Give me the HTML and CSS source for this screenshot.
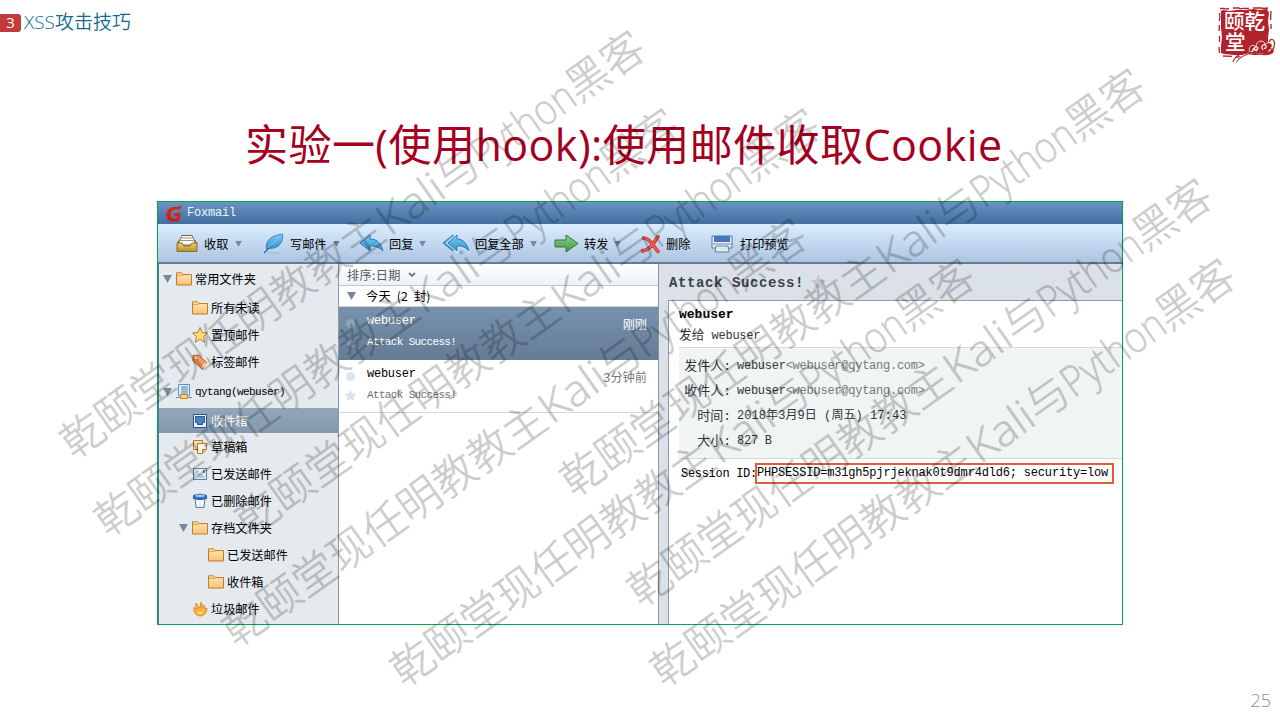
FILE: index.html
```html
<!DOCTYPE html>
<html lang="zh-CN">
<head>
<meta charset="utf-8">
<title>XSS攻击技巧</title>
<link rel="stylesheet" href="styles.css">
</head>
<body>
<svg class="defs" width="0" height="0">
  <defs>
    <linearGradient id="gFolder" x1="0" y1="0" x2="0" y2="1"><stop offset="0" stop-color="#ffe6b4"/><stop offset="1" stop-color="#fcc274"/></linearGradient>
    <linearGradient id="gBlue" x1="0" y1="0" x2="0" y2="1"><stop offset="0" stop-color="#7ccbf3"/><stop offset="1" stop-color="#3490d2"/></linearGradient>
    <linearGradient id="gGreen" x1="0" y1="0" x2="0" y2="1"><stop offset="0" stop-color="#8fd08c"/><stop offset="1" stop-color="#3d9a45"/></linearGradient>
    <linearGradient id="gGold" x1="0" y1="0" x2="0" y2="1"><stop offset="0" stop-color="#e8cf7d"/><stop offset="1" stop-color="#b98f2f"/></linearGradient>
    <symbol id="folder" viewBox="0 0 16 14"><path d="M.5 13V.8h5L7 2.500h8.500V13z" fill="url(#gFolder)" stroke="#c07d2b"/><path d="M1 3.300h6" stroke="#dc9b48"/></symbol>
    <symbol id="tri" viewBox="0 0 9 8"><path d="M0 0h9L4.500 8z" fill="#7489a0"/></symbol>
    <symbol id="star" viewBox="0 0 16 16"><path d="M8 .5l2.200 5 5.300.5-4 3.600 1.200 5.600L8 12.300l-4.700 2.900 1.200-5.600L.5 6l5.300-.5z"/></symbol>
  </defs>
</svg>
<main class="slide">
  <header class="top">
    <span class="badge">3</span><span class="crumb">XSS攻击技巧</span>
    <svg class="seal" width="60" height="58" viewBox="0 0 60 58">
      <path d="M4 5l2-1 6 1 8-1 7 0 10-1 5 1 8-1 2 4-1 8 1 9-1 8 1 12-2 4-12 1H17l-10-1-3-1V40l1-9-1-9V11z" fill="#b0232a"/>
      <path d="M3 2.500h4l2 .6 3-.6M16 2h6l1 .8 3-.5h6M36 2h8l3 .5 4-.5M2.500 7l.4 4-.6 4M2.500 19l-.4 6M2.500 30v6M2 41l.5 6M6 50l9 .4M19 51h5M54 5l-.4 9M54 18v5" stroke="#b0232a" stroke-width="1.300" fill="none"/>
      <text class="seal-text" x="7" y="22.500">颐乾</text><text class="seal-text" x="8" y="43.500">堂</text>
      <path d="M33 46c-3-5 3-9 6-5 0-7 9-8 9-2 3-5 10-1 6 3 5 0 4 7-3 7-7-1-13-3-20 0-7 2-12 7-14 12 1-6 6-12 15-14" fill="#b0232a" stroke="#fff" stroke-width=".8"/>
      <path d="M40 45c-4-1-3-5 0-4 2 1 1 3-1 2M46 44c-3-4 1-7 3-4 1 2-1 3-2 2M34 46c2-1 3-2 2-4M51 45c2 0 3-1 2-2" fill="none" stroke="#fff" stroke-width="1.100"/>
      <path d="M16 56c3-8 9-9 17-9 9 0 18 5 22-2 2-3 3-7 2-10-2-3-5-1-4 1" fill="none" stroke="#b0232a" stroke-width="1.200"/>
    </svg>
  </header>
  <h1 class="title">实验一(使用hook):使用邮件收取Cookie</h1>

  <section class="window">
    <div class="titlebar">
      <svg width="17" height="17" viewBox="0 0 17 17"><path d="M15.500 0L14 4.500H8L5 7v5l1.500 1.500h4l1-2.500H8V8h7l-1 6-2.500 2.500H4L1 14 0 9.500 2 5l4-3h6z" fill="#dc2412"/><path d="M2 12l3 3h6" stroke="#a41408" fill="none"/></svg>
      <span>Foxmail</span>
    </div>
    <div class="toolbar">
      <div class="tool t1"><svg width="22" height="20" viewBox="0 0 22 20"><path d="M3 8l3-6.500h10L19 8v3H3z" fill="#fff" stroke="#75633d"/><path d="M5.500 4h11M4.500 6.500h13" stroke="#938568" stroke-width=".9"/><path d="M1 9l2.500-3M21 9l-2.500-3" stroke="#70561f"/><path d="M1 9h5l2 3h6l2-3h5v8.500H1z" fill="url(#gGold)" stroke="#8d6b22"/></svg><span>收取</span><svg class="drop"><use href="#tri"/></svg></div>
      <div class="tool t2"><svg width="22" height="22" viewBox="0 0 22 22"><path d="M5 20h13" stroke="#9cb7cf" stroke-width="2" opacity=".5"/><path d="M3.500 16C1.500 7 10 2 19.500 1c1 8-3 15-14 14.500z" fill="url(#gBlue)" stroke="#2d80bd" stroke-width=".8"/><path d="M1 20L8 13" stroke="#2a6ba3" stroke-width="1.300"/><path d="M5 15L16 4" stroke="#a5dcf7" stroke-width=".8"/></svg><span>写邮件</span><svg class="drop"><use href="#tri"/></svg></div>
      <div class="tool t3"><svg width="25" height="20" viewBox="0 0 25 20"><path d="M1 9L11 1v4c7 0 11 4 13 12-4-4-8-5-13-5v5z" fill="url(#gBlue)" stroke="#3179b6"/><path d="M9 19h14" stroke="#9cb7cf" opacity=".6"/></svg><span>回复</span><svg class="drop"><use href="#tri"/></svg></div>
      <div class="tool t4"><svg width="28" height="20" viewBox="0 0 28 20"><path d="M1 9L11 1v16z" fill="url(#gBlue)" stroke="#3179b6"/><path d="M6 9l9-8v4c6 0 10 4 12 12-4-4-7-5-12-5v5z" fill="none" stroke="#d4e8f8" stroke-width="2.500"/><path d="M6 9l9-8v4c6 0 10 4 12 12-4-4-7-5-12-5v5z" fill="url(#gBlue)" stroke="#3179b6"/></svg><span>回复全部</span><svg class="drop"><use href="#tri"/></svg></div>
      <div class="tool t5"><svg width="25" height="20" viewBox="0 0 25 20"><path d="M1 6h11V1l12 8.500L12 18v-5H1z" fill="url(#gGreen)" stroke="#2f7938"/></svg><span>转发</span><svg class="drop"><use href="#tri"/></svg></div>
      <div class="tool t6"><svg width="20" height="19" viewBox="0 0 20 19"><path d="M2.500 3c6 0 8 6 14.500 13.500M17 1.500C13 7 11 14 1.500 16" fill="none" stroke="#b2322f" stroke-width="3.600" stroke-linecap="round"/><path d="M2.500 3c6 0 8 6 14.500 13.500M17 1.500C13 7 11 14 1.500 16" fill="none" stroke="#ee5a50" stroke-width="2.200" stroke-linecap="round"/></svg><span>删除</span></div>
      <div class="tool t7"><svg width="22" height="18" viewBox="0 0 22 18"><path d="M1 1h20v12H1z" fill="#e8f0f7" stroke="#5b768e"/><path d="M3 1h16v6H3z" fill="#4577be"/><path d="M2 9h18" stroke="#708ba3"/><path d="M5 11h12l1 6H4z" fill="#d8eef4" stroke="#5f8b9b"/></svg><span>打印预览</span></div>
    </div>
    <div class="body">
      <nav class="side">
        <div class="row r0 first"><svg class="exp"><use href="#tri"/></svg><svg class="ic"><use href="#folder"/></svg><span>常用文件夹</span></div>
        <div class="row r1"><svg class="ic"><use href="#folder"/></svg><span>所有未读</span></div>
        <div class="row r1"><svg class="ic" viewBox="0 0 16 16"><use href="#star" fill="#ffdc7c" stroke="#b67d2b"/></svg><span>置顶邮件</span></div>
        <div class="row r1"><svg class="ic" viewBox="0 0 16 16"><path d="M1 1.500l6-.5 8 8-5 6-9-8z" fill="#f29b59" stroke="#b75c21"/><path d="M9.500 14L14.500 9" stroke="#ffd09e" stroke-width="2"/><circle cx="4" cy="4" r="1.500" fill="#fff" stroke="#a9551f" stroke-width=".6"/></svg><span>标签邮件</span></div>
        <div class="row r0 account"><svg class="exp"><use href="#tri"/></svg><svg class="ic" viewBox="0 0 16 16"><path d="M2.500.5h11v11h-11z" fill="#e3f2fd" stroke="#5b92c2"/><path d="M5 3h7M5 5h7M5 7h7M5 9h7" stroke="#527fa8"/><path d="M0 13.500h16" stroke="#6d8aa5"/><path d="M4.500 10.500h7v4h-7z" fill="#ffd275" stroke="#c28a2d"/></svg><span class="lat">qytang(webuser)</span></div>
        <div class="row r1 on"><svg class="ic" viewBox="0 0 16 16"><path d="M1.500 1.500h13v13h-13z" fill="#edf5fc" stroke="#234f86"/><path d="M3.500 3.500h9v6h-2v2h-5v-2h-2z" fill="#4b83c6" stroke="#28578f"/></svg><span>收件箱</span></div>
        <div class="row r1"><svg class="ic" viewBox="0 0 16 16"><path d="M1.500 1.500h9v9h-9z" fill="#ffe2b3" stroke="#b27a38"/><path d="M5.500 4.500h9v6l-4 4h-5z" fill="#fff3dc" stroke="#b27a38"/><path d="M14.500 10.500h-4v4" fill="#eab970" stroke="#b27a38"/></svg><span>草稿箱</span></div>
        <div class="row r1"><svg class="ic" viewBox="0 0 16 16"><path d="M1.500 2.500h13v11h-13z" fill="#e9f1f8" stroke="#607e9b"/><path d="M11 4h2v3h-2z" fill="#5b9c71"/><path d="M3 5h4M3 7h3M6 9h5M6 11h7" stroke="#89a5be"/></svg><span>已发送邮件</span></div>
        <div class="row r1"><svg class="ic" viewBox="0 0 16 16"><path d="M3 5h10l-1 9.500H4z" fill="#eef3f7" stroke="#63788e"/><path d="M1.500 2.500q6.500-3 13 0v3q-6.500 2-13 0z" fill="#3274c6" stroke="#1e559b"/><ellipse cx="8" cy="2.800" rx="5" ry="1.200" fill="#9bc7f3"/></svg><span>已删除邮件</span></div>
        <div class="row r1x"><svg class="exp"><use href="#tri"/></svg><svg class="ic"><use href="#folder"/></svg><span>存档文件夹</span></div>
        <div class="row r2"><svg class="ic"><use href="#folder"/></svg><span>已发送邮件</span></div>
        <div class="row r2"><svg class="ic"><use href="#folder"/></svg><span>收件箱</span></div>
        <div class="row r1"><svg class="ic" viewBox="0 0 16 16"><path d="M2 6c1 1 2 2 3 2 0-2-2-3-1-6 1 2 3 3 4 5 1-2 0-4 1-6 1 2 2 4 1 6 1 0 2-1 2-3 1 1 1 2 1 4l2-1c0 5-3 8-7 8S1 11 2 6z" fill="#fbb040" stroke="#d7801f" stroke-width=".8"/><path d="M5 10.500l3 1 3-1c0 3-6 3-6 0z" fill="#ffe98f"/></svg><span>垃圾邮件</span></div>
      </nav>
      <section class="list">
        <div class="sort">排序:日期<svg width="8" height="6" viewBox="0 0 8 6"><path d="M1 1l3 3 3-3" fill="none" stroke="#4e5963" stroke-width="1.500"/></svg></div>
        <div class="day"><svg class="exp"><use href="#tri"/></svg><span>今天 (2 封)</span></div>
        <article class="mail sel">
          <div class="marks"><i class="dot"></i><svg width="13" height="13" viewBox="0 0 16 16"><use href="#star" fill="#7f9ab4"/></svg></div>
          <div class="who"><div>webuser</div><div>Attack Success!</div></div><time>刚刚</time>
        </article>
        <article class="mail">
          <div class="marks"><i class="dot"></i><svg width="13" height="13" viewBox="0 0 16 16"><use href="#star" fill="#d7e3ee"/></svg></div>
          <div class="who"><div>webuser</div><div class="subj">Attack Success!</div></div><time>3分钟前</time>
        </article>
      </section>
      <section class="reader">
        <div class="subject"><span>Attack Success!</span><svg width="17" height="17" viewBox="0 0 16 16"><use href="#star" fill="#c0c8d0"/></svg></div>
        <div class="message">
          <div class="from">webuser</div>
          <div class="to"><span class="cjk">发给</span> webuser</div>
          <div class="meta">
            <span class="k">发件人:</span><span>webuser<em>&lt;webuser@qytang.com&gt;</em></span>
            <span class="k">收件人:</span><span>webuser<em>&lt;webuser@qytang.com&gt;</em></span>
            <span class="k">时间:</span><span class="date">2018年3月9日 (周五) 17:43</span>
            <span class="k">大小:</span><span>827 B</span>
          </div>
          <div class="session"><span>Session ID:</span><span class="box">PHPSESSID=m31gh5pjrjeknak0t9dmr4dld6; security=low</span></div>
        </div>
      </section>
    </div>
  </section>
  <footer class="page">25</footer>
  <svg class="wm" width="1280" height="720" viewBox="0 0 1280 720"></svg>
</main>
<script src="watermark.js"></script>
</body>
</html>
```
FILE: watermark.js
```js
// Centre of the first character of every diagonal watermark line.
const origins = [[82,434],[116,512],[257,512],[244,622],[582,472],[649,582],[412,662],[672,662]];
const layer = document.querySelector('.wm');
layer.innerHTML = origins.map(([x, y]) =>
  `<g transform="translate(${x} ${y}) rotate(-35.2)">
    <text x="-21.5" y="16.5" textLength="385" lengthAdjust="spacingAndGlyphs">乾颐堂现任明教教主</text>
    <text x="365" y="16.5" textLength="72" lengthAdjust="spacingAndGlyphs">Kali</text>
    <text x="437" y="16.5">与</text>
    <text x="480" y="16.5" textLength="117" lengthAdjust="spacingAndGlyphs">Python</text>
    <text x="597" y="16.5" textLength="85" lengthAdjust="spacingAndGlyphs">黑客</text>
  </g>`).join('');
```
FILE: styles.css
```css
* { box-sizing: border-box; }
body { margin: 0; background: #fff; }
.defs { position: absolute; }
.slide { position: relative; width: 1280px; height: 720px; overflow: hidden; background: #fff; display: flex; flex-direction: column; font-family: "Open Sans", "Noto Sans CJK SC", sans-serif; }
.top { display: flex; align-items: flex-start; height: 66px; flex: none; }
.badge { width: 21px; height: 18px; margin-top: 14px; background: #c23b3c; color: #fff; border-radius: 0 3px 3px 0; font-size: 15px; line-height: 17px; text-align: center; }
.crumb { margin: 9px 0 0 3px; font-size: 19px; line-height: 26px; color: #14698f; font-weight: 350; white-space: nowrap; }
.seal { margin: 6px 3px 0 auto; }
.seal-text { font: 500 20.5px "Noto Sans CJK SC", sans-serif; fill: #fff; }
.title { margin: 49px 0 0 245px; height: 60px; line-height: 60px; font-size: 43px; font-weight: 400; letter-spacing: .45px; color: #a50021; white-space: nowrap; }
.window { margin: 26px 0 0 157px; width: 966px; height: 424px; border: 1px solid #00a651; background: #fff; display: flex; flex-direction: column; font: 12.2px "Noto Sans CJK SC", sans-serif; color: #000; flex: none; overflow: hidden; }
.titlebar { height: 22px; flex: none; background: linear-gradient(#6994c1, #416f9f); display: flex; align-items: center; padding-left: 8px; gap: 4px; color: #eef6fc; font: 12px "Liberation Mono", monospace; letter-spacing: -.2px; }
.toolbar { height: 40px; flex: none; background: linear-gradient(#dbeefe, #adc4e2); border-bottom: 2px solid #657b94; display: flex; align-items: center; padding: 2px 0 0 18px; }
.tool { display: flex; align-items: center; gap: 6px; white-space: nowrap; flex: none; }
.drop { width: 9px; height: 6px; flex: none; }
.t1 { width: 87px; }
.t2 { width: 96px; gap: 5px; }
.t3 { width: 83px; gap: 5px; }
.t4 { width: 112px; gap: 5px; }
.t5 { width: 87px; gap: 5px; }
.t6 { width: 70px; gap: 5px; }
.t7 { gap: 7px; }
.body { flex: 1; display: flex; min-height: 0; border-left: 1px solid #527a9f; }
.side { width: 180px; flex: none; background: #e5eaee; border-right: 1px solid #8e99a5; overflow: hidden; }
.row { height: 27px; display: flex; align-items: center; white-space: nowrap; flex: none; }
.row .ic { width: 16px; height: 14px; margin-right: 3px; flex: none; }
.row .ic[viewBox] { height: 16px; }
.exp { width: 9px; height: 8px; margin-right: 4px; flex: none; }
.row.first { height: 30px; }
.row.account { height: 33px; }
.r0 { padding-left: 4px; }
.r1 { padding-left: 33px; }
.r1x { padding-left: 20px; }
.r2 { padding-left: 49px; }
.row.on { height: 25px; background: linear-gradient(#93a6b9, #8499ae); color: #fff; }
.lat { font: 11px "Liberation Mono", monospace; letter-spacing: -.6px; }
.list { width: 319px; flex: none; }
.sort { height: 22px; background: linear-gradient(#fff, #eef2f6); border-bottom: 1px solid #c3c8cd; padding-left: 8px; display: flex; align-items: center; gap: 7px; color: #555c63; letter-spacing: .3px; }
.day { height: 21px; border-bottom: 1px solid #d6d2cb; padding-left: 8px; display: flex; align-items: center; letter-spacing: .2px; word-spacing: 3px; }
.day .exp { margin-right: 10px; }
.mail { height: 53px; display: flex; padding: 4px 11px 0 5px; border-bottom: 1px solid #d5d8da; font: 12px "Liberation Mono", "Noto Sans CJK SC", monospace; letter-spacing: -.25px; }
.marks { width: 23px; padding-top: 8px; display: flex; flex-direction: column; gap: 8px; }
.dot { width: 9px; height: 9px; margin-left: 2px; border-radius: 50%; background: #dbe6ed; }
.who { line-height: 21px; font-size: 12px; }
.who div + div { font-size: 11px; letter-spacing: -.65px; }
.mail .subj { color: #6d7276; }
.mail time { margin: 6px 0 0 auto; line-height: 18px; font-size: 12.2px; color: #777; letter-spacing: 0; }
.sel { background: linear-gradient(#7792ae, #657c95); color: #fff; border-bottom-color: #657c95; }
.mail.sel time { color: #fff; }
.sel .dot { background: #8ca4ba; }
.reader { flex: 1; min-width: 0; background: #dbe1e8; border-left: 1px solid #8995a3; padding-left: 9px; display: flex; flex-direction: column; font: 12px "Liberation Mono", "Noto Sans CJK SC", monospace; letter-spacing: -.25px; color: #30363d; }
.subject { height: 36px; flex: none; display: flex; align-items: center; gap: 6px; padding: 1px 0 0 1px; font-size: 14px; font-weight: 700; letter-spacing: .6px; color: #3a4149; }
.message { flex: 1; background: #fff; border: solid #8f9aa6; border-width: 1px 0 0 1px; padding: 3px 0 0 10px; white-space: nowrap; }
.from { font-weight: 700; line-height: 21px; color: #000; font-size: 13px; letter-spacing: 0; }
.to { height: 21px; line-height: 21px; }
.cjk { font-size: 12.7px; letter-spacing: .1px; }
.meta { margin-top: 1px; height: 112px; background: #f0f4f3; border: solid #d5d9d9; border-width: 1px 0; display: grid; grid-template-columns: 52px auto; column-gap: 6px; grid-auto-rows: 25px; padding-top: 6px; line-height: 25px; justify-content: start; }
.k { font-size: 13px; text-align: right; letter-spacing: 0; }
.meta em { font-style: normal; color: #747a7e; }
.date { letter-spacing: .07px; }
.session { display: flex; align-items: center; padding: 4px 0 0 2px; color: #000; }
.session > span:first-child { width: 74px; letter-spacing: -.3px; }
.box { border: 2px solid #dd6039; height: 21px; line-height: 17px; width: 359px; letter-spacing: -.18px; }
.page { margin: auto 9px 10px auto; font-size: 18px; line-height: 20px; color: #8c8c8c; font-weight: 350; }
.wm { position: absolute; inset: 0; pointer-events: none; font: 300 43px "Open Sans", "Noto Sans CJK SC", sans-serif; fill: #000; stroke: #000; stroke-width: .5px; opacity: .2; }
```
